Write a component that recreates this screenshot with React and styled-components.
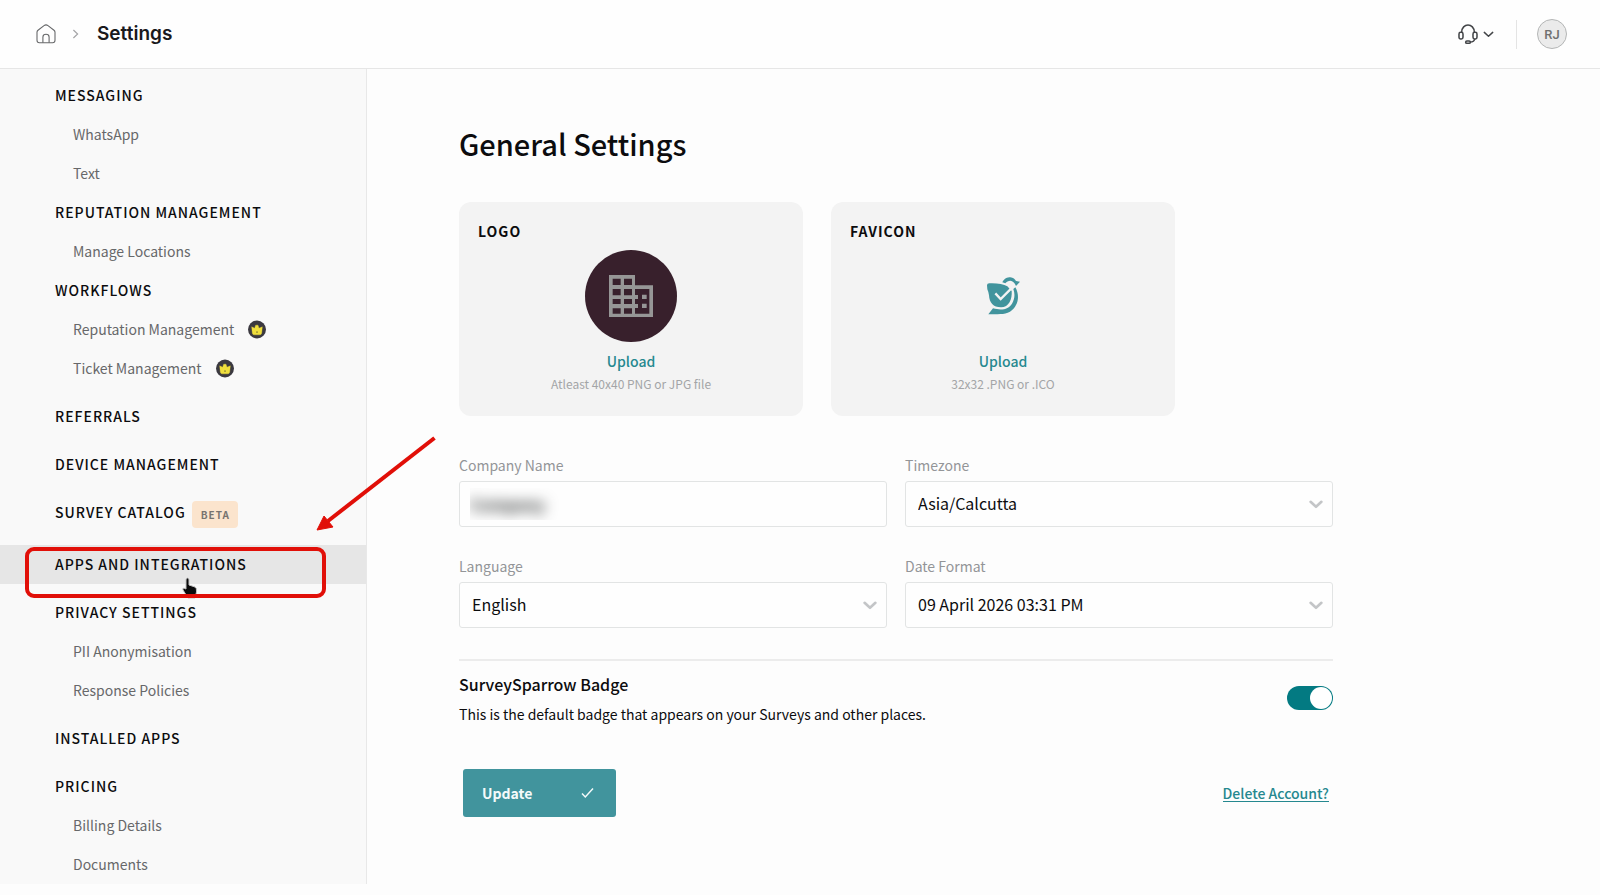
import React, { useState } from "react";
import styled, { createGlobalStyle, css } from "styled-components";

const GlobalStyle = createGlobalStyle`
  *, *::before, *::after { box-sizing: border-box; }
  body {
    margin: 0;
    background: #fdfdfd;
    color: #0c0c0e;
    font-family: "Noto Sans CJK SC", "Noto Sans", sans-serif;
    font-size: 14px;
    line-height: 23px;
  }
  h1, h2, h3, p, ul { margin: 0; padding: 0; }
  ul { list-style: none; }
  a { color: inherit; text-decoration: none; }
  button, input, select { font: inherit; color: inherit; }
  svg { display: block; flex: none; }
`;

const Page = styled.div`
  display: flex;
  flex-direction: column;
  min-height: 100vh;
`;

const Header = styled.header`
  display: flex;
  align-items: center;
  justify-content: space-between;
  height: 69px;
  padding: 0 33px 0 36px;
  background: #fefefe;
  border-bottom: 1px solid #e6e6e6;
`;

const Breadcrumb = styled.nav`
  display: flex;
  align-items: center;
  gap: 16px;
`;

const Current = styled.h1`
  padding-left: 2px;
  font-family: Inter, sans-serif;
  font-size: 19px;
  font-weight: 600;
  line-height: 24px;
  color: #19191c;
`;

const Tools = styled.div`
  display: flex;
  align-items: center;
  gap: 22px;
`;

const HelpButton = styled.button`
  display: flex;
  align-items: center;
  gap: 5px;
  padding: 0;
  border: 0;
  background: none;
`;

const Separator = styled.span`
  width: 1px;
  height: 29px;
  background: #e4e4e4;
`;

const Avatar = styled.button`
  width: 30px;
  height: 30px;
  margin-left: -2px;
  padding: 0;
  border: 1px solid #b4b6b6;
  border-radius: 50%;
  background: #ebebeb;
  color: #707070;
  font-family: Roboto, sans-serif;
  font-size: 13px;
  font-weight: 500;
`;

const Body = styled.div`
  display: flex;
  flex: 1;
  align-items: flex-start;
`;

const Sidebar = styled.nav`
  flex: none;
  width: 367px;
  padding-top: 7px;
  background: #f9f9f9;
  border-right: 1px solid #e8e8e8;
`;

const Group = styled.ul`
  margin-top: ${(p) => (p.$tight ? "0" : "9px")};
`;

const row = css`
  position: relative;
  display: flex;
  align-items: flex-start;
  padding: 8px 20px 8px 55px;
`;

const Section = styled.li`
  ${row}
  gap: 6px;
  background: ${(p) => (p.$active ? "#e6e6e6" : "none")};
  font-weight: 500;
  letter-spacing: 1px;
`;

const SubItem = styled.li`
  ${row}
  gap: 14px;
  padding-left: 73px;
  color: #67686a;
`;

const Beta = styled.span`
  padding: 0 8px 0 9px;
  border-radius: 4px;
  background: #fbe4cd;
  color: #77736f;
  font-size: 10px;
  font-weight: 700;
  line-height: 27px;
`;

const Highlight = styled.span`
  position: absolute;
  left: 25px;
  top: 2px;
  width: 301px;
  height: 51px;
  border: 4px solid #e10f08;
  border-radius: 9px;
  pointer-events: none;
  z-index: 2;
`;

const Arrow = styled.svg`
  position: absolute;
  left: 314px;
  top: -110px;
  z-index: 2;
  pointer-events: none;
`;

const Pointer = styled.svg`
  position: absolute;
  left: 180px;
  top: 32px;
  z-index: 1;
  pointer-events: none;
`;

const Main = styled.main`
  flex: 1;
  min-width: 0;
  padding: 50px 92px 60px;
`;

const Content = styled.div`
  max-width: 874px;
`;

const Title = styled.h2`
  font-size: 29px;
  font-weight: 500;
  line-height: 48px;
`;

const Cards = styled.div`
  display: flex;
  gap: 28px;
  margin-top: 35px;
`;

const Card = styled.section`
  display: flex;
  flex: 0 1 344px;
  flex-direction: column;
  align-items: center;
  height: 214px;
  padding: 17px 19px;
  border-radius: 12px;
  background: #f3f3f3;
`;

const CardTitle = styled.h3`
  align-self: flex-start;
  font-size: 14px;
  font-weight: 700;
  line-height: 24px;
  letter-spacing: 1px;
`;

const Preview = styled.div`
  display: flex;
  align-items: center;
  justify-content: center;
  width: 92px;
  height: 92px;
  margin-top: 7px;
  border-radius: 50%;
  background: ${(p) => (p.$dark ? "#38202c" : "none")};
`;

const UploadButton = styled.button`
  margin-top: 7px;
  padding: 0;
  border: 0;
  background: none;
  color: #25888f;
  font-weight: 500;
  line-height: 24px;
`;

const Hint = styled.p`
  color: #a3a5a7;
  font-size: 12px;
  line-height: 22px;
`;

const Fields = styled.div`
  display: grid;
  grid-template-columns: 1fr 1fr;
  gap: 28px 18px;
  margin-top: 38px;
  padding-bottom: 31px;
  border-bottom: 2px solid #ececec;
`;

const Field = styled.div`
  display: flex;
  flex-direction: column;
  gap: 4px;
`;

const Label = styled.label`
  color: #939598;
`;

const Control = styled.div`
  position: relative;
  display: flex;
  align-items: center;
  height: 46px;
  border: 1px solid #e2e4e4;
  border-radius: 3px;
  background: #fefefe;
  & > svg {
    position: absolute;
    right: 9px;
    top: 18px;
    pointer-events: none;
  }
`;

const Select = styled.select`
  width: 100%;
  height: 100%;
  padding: 0 40px 2px 12px;
  border: 0;
  background: none;
  appearance: none;
  font-size: 16px;
`;

const Redacted = styled.div`
  flex: 1;
  margin: 4px 10px;
  overflow: hidden;
`;

const TextInput = styled.input`
  width: 100%;
  height: 32px;
  padding: 0;
  border: 0;
  background: none;
  color: #1c2020;
  font-size: 16px;
  font-weight: 700;
  filter: blur(7px);
`;

const BadgeRow = styled.div`
  display: flex;
  align-items: flex-start;
  justify-content: space-between;
  padding-top: 11px;
`;

const BadgeTitle = styled.label`
  font-size: 16px;
  font-weight: 500;
  line-height: 24px;
`;

const BadgeText = styled.p`
  margin-top: 5px;
  line-height: 24px;
`;

const Toggle = styled.input`
  appearance: none;
  width: 46px;
  height: 24px;
  margin: 14px 0 0;
  padding: 1px;
  border-radius: 12px;
  background: ${(p) => (p.checked ? "#037a82" : "#c4c6c8")};
  &::before {
    content: "";
    display: block;
    width: 22px;
    height: 22px;
    margin-left: ${(p) => (p.checked ? "22px" : "0")};
    border-radius: 50%;
    background: #fff;
  }
`;

const Actions = styled.div`
  display: flex;
  align-items: center;
  justify-content: space-between;
  margin-top: 43px;
  padding: 0 4px;
`;

const UpdateButton = styled.button`
  display: flex;
  align-items: center;
  justify-content: space-between;
  width: 153px;
  height: 48px;
  padding: 0 22px 0 19px;
  border: 0;
  border-radius: 3px;
  background: #41949d;
  color: #f4fafa;
  font-weight: 700;
`;

const DeleteLink = styled.a`
  border-bottom: 1px solid #25888f;
  color: #25888f;
  font-weight: 500;
  line-height: 16px;
`;

const HomeIcon = () => (
  <svg width="20" height="20" viewBox="0 0 20 20" fill="none" stroke="#67686a" strokeWidth="1.1">
    <path d="M1 8.2 Q1 7 2 6.2 L8 1.6 Q10 .2 12 1.6 L18 6.2 Q19 7 19 8.2 V16.3 Q19 18.7 16.6 18.7 H3.4 Q1 18.7 1 16.3Z" />
    <path d="M6.9 18.7 V13 Q7 10.2 10 10.2 T13.1 13 V18.7" />
  </svg>
);

const CrumbIcon = () => (
  <svg width="7" height="10" viewBox="0 0 7 10" fill="none" stroke="#a5a5a7" strokeWidth="1.2">
    <path d="M1.4 1 L5.6 5 L1.4 9" />
  </svg>
);

const HeadsetIcon = () => (
  <svg width="20" height="21" viewBox="0 0 60 63" fill="none" stroke="#434548" strokeWidth="4.6">
    <path d="M11 25 C11 -4 49 -4 49 25" />
    <rect x="3" y="25" width="12" height="20" rx="5" />
    <rect x="45" y="25" width="12" height="20" rx="5" />
    <path d="M50 45 Q49 54 36 54" />
    <rect x="23" y="51" width="14" height="7" rx="3.5" />
  </svg>
);

const Chevron = ({ width, height, stroke, weight }) => (
  <svg width={width} height={height} viewBox="0 0 14 9" fill="none" stroke={stroke} strokeWidth={weight}>
    <path d="M1.6 1.8 L7 6.8 L12.4 1.8" strokeLinecap="round" strokeLinejoin="round" />
  </svg>
);

const CrownIcon = () => (
  <svg width="18" height="23" viewBox="0 -7.5 54 69" role="img" aria-label="Premium">
    <circle cx="27" cy="27" r="27" fill="#3b3940" />
    <path d="M11 19 L20 23 L23 14 H30 L33 23 L43 19 L41 38 Q40 43 35 43 H19 Q14 43 13 38Z" fill="#f0df3c" stroke="#f0df3c" strokeWidth="1" strokeLinejoin="round" />
    <path d="M24 34 Q27 37 30 34" stroke="#6a632d" strokeWidth="2.5" fill="none" />
  </svg>
);

const BuildingIcon = () => (
  <svg width="44" height="42" viewBox="0 0 132 126" fill="#969696">
    <path
      fillRule="evenodd"
      d="M0 0 H78 V31 H132 V126 H0Z M11 11 V30 H35 V11Z M45 11 V30 H69 V11Z M11 42 V61 H35 V42Z M45 42 V61 H69 V42Z M11 72 V87 H35 V72Z M45 72 V87 H69 V72Z M11 100 V116 H35 V100Z M45 100 V116 H69 V100Z M78 42 V60 H87 V72 H78 V87 H87 V99 H78 V116 H121 V42Z M99 59 H113 V72 H99Z M99 86 H113 V99 H99Z"
    />
  </svg>
);

const SparrowLogo = () => (
  <svg width="35" height="40" viewBox="498 260 105 120" fill="#41949d">
    <path d="M501 288 Q501 282 508 282 C530 281 550 284 562 291 L575 305 C577 330 567 354 543 354 C520 354 508 340 507 318 Q506 309 502 300Z" />
    <path d="M547 279 C552 268 562 264 571 264 C580 265 585 270 588 275 L600 277 L588 290 C584 279 578 275 571 274 C565 274 560 277 556 282Z" />
    <path d="M586 294 C600 318 596 350 570 367 C552 377 532 373 505 375 L519 357 C548 365 566 358 576 343 C585 328 585 312 580 299Z" />
    <path d="M526 312 L542 329 L577 294" fill="none" stroke="#f3f3f3" strokeWidth="7" />
  </svg>
);

const CheckIcon = () => (
  <svg width="13" height="12" viewBox="0 0 13 12" fill="none" stroke="#f4fafa" strokeWidth="1.5">
    <path d="M1 6.5 L4.3 10 L12 1.6" />
  </svg>
);

const Annotation = () => (
  <>
    <Pointer width="20" height="24" viewBox="0 0 20 24">
      <path
        d="M6 2 Q7.5 0 9 2 V8 L15 10 Q17 11 16.5 15 L15 21 H8 L3 13 Q2 10 6 12Z"
        fill="#0b0b0c"
        stroke="#c4c4c4"
      />
    </Pointer>
    <Highlight />
    <Arrow width="124" height="98" viewBox="0 0 124 98">
      <path d="M120.5 3 L14 86" stroke="#e10f08" strokeWidth="4" />
      <path d="M3 95 L10 81 L19 92Z" fill="#e10f08" stroke="#e10f08" />
    </Arrow>
  </>
);

const sections = [
  { title: "MESSAGING", tight: true, items: [["WhatsApp"], ["Text"]] },
  { title: "REPUTATION MANAGEMENT", tight: true, items: [["Manage Locations"]] },
  { title: "WORKFLOWS", tight: true, items: [["Reputation Management", true], ["Ticket Management", true]] },
  { title: "REFERRALS" },
  { title: "DEVICE MANAGEMENT" },
  { title: "SURVEY CATALOG", beta: true },
  { title: "APPS AND INTEGRATIONS", active: true },
  { title: "PRIVACY SETTINGS", items: [["PII Anonymisation"], ["Response Policies"]] },
  { title: "INSTALLED APPS" },
  { title: "PRICING", items: [["Billing Details"], ["Documents"]] },
];

function SelectField({ id, label, options }) {
  return (
    <Field>
      <Label htmlFor={id}>{label}</Label>
      <Control>
        <Select id={id}>
          {options.map((option) => (
            <option key={option}>{option}</option>
          ))}
        </Select>
        <Chevron width={14} height={9} stroke="#c3c5c7" weight={2.6} />
      </Control>
    </Field>
  );
}

export default function App() {
  const [badge, setBadge] = useState(true);
  return (
    <Page>
      <GlobalStyle />
      <Header>
        <Breadcrumb aria-label="Breadcrumb">
          <a href="#home" aria-label="Home"><HomeIcon /></a>
          <CrumbIcon />
          <Current>Settings</Current>
        </Breadcrumb>
        <Tools>
          <HelpButton aria-label="Help">
            <HeadsetIcon />
            <Chevron width={11} height={7} stroke="#434548" weight={1.9} />
          </HelpButton>
          <Separator />
          <Avatar>RJ</Avatar>
        </Tools>
      </Header>
      <Body>
        <Sidebar aria-label="Settings">
          {sections.map((s) => (
            <Group key={s.title} $tight={s.tight}>
              <Section $active={s.active}>
                {s.items ? <span>{s.title}</span> : <a href="#section">{s.title}</a>}
                {s.beta && <Beta>BETA</Beta>}
                {s.active && <Annotation />}
              </Section>
              {(s.items || []).map(([name, premium]) => (
                <SubItem key={name}>
                  <a href="#item">{name}</a>
                  {premium && <CrownIcon />}
                </SubItem>
              ))}
            </Group>
          ))}
        </Sidebar>
        <Main>
          <Content>
            <Title>General Settings</Title>
            <Cards>
              <Card>
                <CardTitle>LOGO</CardTitle>
                <Preview $dark><BuildingIcon /></Preview>
                <UploadButton>Upload</UploadButton>
                <Hint>Atleast 40x40 PNG or JPG file</Hint>
              </Card>
              <Card>
                <CardTitle>FAVICON</CardTitle>
                <Preview><SparrowLogo /></Preview>
                <UploadButton>Upload</UploadButton>
                <Hint>32x32 .PNG or .ICO</Hint>
              </Card>
            </Cards>
            <Fields>
              <Field>
                <Label htmlFor="company">Company Name</Label>
                <Control>
                  <Redacted>
                    <TextInput id="company" defaultValue="Company" />
                  </Redacted>
                </Control>
              </Field>
              <SelectField id="timezone" label="Timezone" options={["Asia/Calcutta"]} />
              <SelectField id="language" label="Language" options={["English"]} />
              <SelectField id="date" label="Date Format" options={["09 April 2026 03:31 PM"]} />
            </Fields>
            <BadgeRow>
              <div>
                <BadgeTitle htmlFor="badge">SurveySparrow Badge</BadgeTitle>
                <BadgeText>This is the default badge that appears on your Surveys and other places.</BadgeText>
              </div>
              <Toggle
                id="badge"
                type="checkbox"
                role="switch"
                checked={badge}
                onChange={(e) => setBadge(e.target.checked)}
              />
            </BadgeRow>
            <Actions>
              <UpdateButton>
                Update
                <CheckIcon />
              </UpdateButton>
              <DeleteLink href="#delete">Delete Account?</DeleteLink>
            </Actions>
          </Content>
        </Main>
      </Body>
    </Page>
  );
}
